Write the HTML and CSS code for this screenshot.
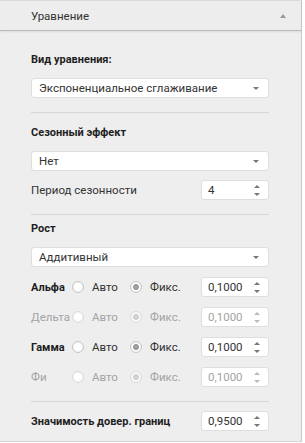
FILE: index.html
```html
<!DOCTYPE html>
<html lang="ru">
<head>
    <meta charset="UTF-8">
    <title>Уравнение</title>
    <link rel="stylesheet" href="styles.css">
</head>
<body>
<div class="panel">
    <div class="panel-head">
        <span>Уравнение</span>
        <span class="caret-up"></span>
    </div>

    <div class="panel-body">
        <div class="section first">
            <div class="caption">Вид уравнения:</div>
            <div class="select"><span>Экспоненциальное сглаживание</span><i class="arrow"></i></div>
        </div>

        <div class="section">
            <div class="caption cap-season">Сезонный эффект</div>
            <div class="select"><span>Нет</span><i class="arrow"></i></div>
            <div class="row row-period">
                <span class="label">Период сезонности</span>
                <div class="spin"><span>4</span><i class="updown"></i></div>
            </div>
        </div>

        <div class="section">
            <div class="caption cap-growth">Рост</div>
            <div class="select"><span>Аддитивный</span><i class="arrow"></i></div>

            <div class="row param">
                <span class="pname bold">Альфа</span>
                <span class="radio"></span><span class="rlabel">Авто</span>
                <span class="radio checked"></span><span class="rlabel">Фикс.</span>
                <div class="spin"><span>0,1000</span><i class="updown"></i></div>
            </div>
            <div class="row param disabled">
                <span class="pname">Дельта</span>
                <span class="radio"></span><span class="rlabel">Авто</span>
                <span class="radio checked"></span><span class="rlabel">Фикс.</span>
                <div class="spin"><span>0,1000</span><i class="updown"></i></div>
            </div>
            <div class="row param">
                <span class="pname bold">Гамма</span>
                <span class="radio"></span><span class="rlabel">Авто</span>
                <span class="radio checked"></span><span class="rlabel">Фикс.</span>
                <div class="spin"><span>0,1000</span><i class="updown"></i></div>
            </div>
            <div class="row param disabled">
                <span class="pname">Фи</span>
                <span class="radio"></span><span class="rlabel">Авто</span>
                <span class="radio checked"></span><span class="rlabel">Фикс.</span>
                <div class="spin"><span>0,1000</span><i class="updown"></i></div>
            </div>
        </div>

        <div class="section last">
            <div class="row">
                <span class="label bold">Значимость довер. границ</span>
                <div class="spin"><span>0,9500</span><i class="updown"></i></div>
            </div>
        </div>
    </div>
</div>
</body>
</html>
```

FILE: styles.css
```css
body { margin: 0; background: #fff; font-family: Roboto, "Liberation Sans", Arial, sans-serif; font-size: 11.5px; color: #222; }

.panel { width: 302px; height: 442px; background: #eeeeef; border-top: 1px solid #dcdcdc; border-right: 1px solid #c9c9c9; border-bottom: 1px solid #d6d6d6; box-sizing: border-box; }

.panel-head { height: 29px; display: flex; align-items: center; justify-content: space-between; padding: 0 15px 0 31px; border-bottom: 1px solid #b9b9b9; box-shadow: 0 1px 2px rgba(0,0,0,0.08); background: #ededee; color: #333; }
.caret-up { width: 0; height: 0; border-left: 3px solid transparent; border-right: 3px solid transparent; border-bottom: 4px solid #999; }

.panel-body { padding: 0 32px 0 31px; }

.section { border-top: 1px solid #d7d7d7; padding: 9px 0 14px; }
.section.first { border-top: none; padding-top: 21px; }
.section.last { padding: 9px 0 0; }
.section.last .row { margin-top: 0; }

.caption { font-weight: bold; font-size: 11px; line-height: 16px; color: #1e1e1e; margin-bottom: 10px; }
.cap-season { margin-top: 3px; }
.cap-growth { margin-top: -3px; margin-bottom: 10px; }

.select { height: 20px; background: #fff; border: 1px solid #dedede; border-radius: 3px; box-sizing: border-box; display: flex; align-items: center; justify-content: space-between; padding: 0 9px 0 7px; color: #333; }
.arrow { width: 0; height: 0; border-left: 3px solid transparent; border-right: 3px solid transparent; border-top: 3px solid #777; }

.row { height: 20px; display: flex; align-items: center; margin-top: 10px; }
.row-period { margin-top: 9px; }
.label { flex: 1; color: #333; }
.bold { font-weight: bold; font-size: 11px; color: #1e1e1e; }

.spin { width: 68px; height: 20px; margin-left: auto; background: #fff; border: 1px solid #dedede; border-radius: 3px; box-sizing: border-box; display: flex; align-items: center; justify-content: space-between; padding: 0 8px 0 6px; color: #333; }
.updown { position: relative; width: 6px; height: 11px; }
.updown::before, .updown::after { content: ""; position: absolute; left: 0; border-left: 3px solid transparent; border-right: 3px solid transparent; }
.updown::before { top: 0; border-bottom: 3px solid #777; }
.updown::after { bottom: 0; border-top: 3px solid #777; }

.param .pname { width: 41px; }
.radio { width: 12px; height: 12px; border: 1px solid #c6c6c6; border-radius: 50%; background: #fff; box-sizing: border-box; box-shadow: inset 0 0 2px rgba(0,0,0,0.12); display: flex; align-items: center; justify-content: center; margin-right: 8px; }
.radio.checked::after { content: ""; width: 6px; height: 6px; border-radius: 50%; background: #a4a4a4; border: 1px solid #8c8c8c; box-sizing: border-box; }
.rlabel { width: 38px; color: #333; }

.disabled .pname, .disabled .rlabel, .disabled .spin { color: #a3a3a3; }
.disabled .radio { border-color: #dadada; }
.disabled .radio.checked::after { background: #d4d4d4; border-color: #c8c8c8; }
.disabled .updown::before { border-bottom-color: #bbb; }
.disabled .updown::after { border-top-color: #bbb; }
```
